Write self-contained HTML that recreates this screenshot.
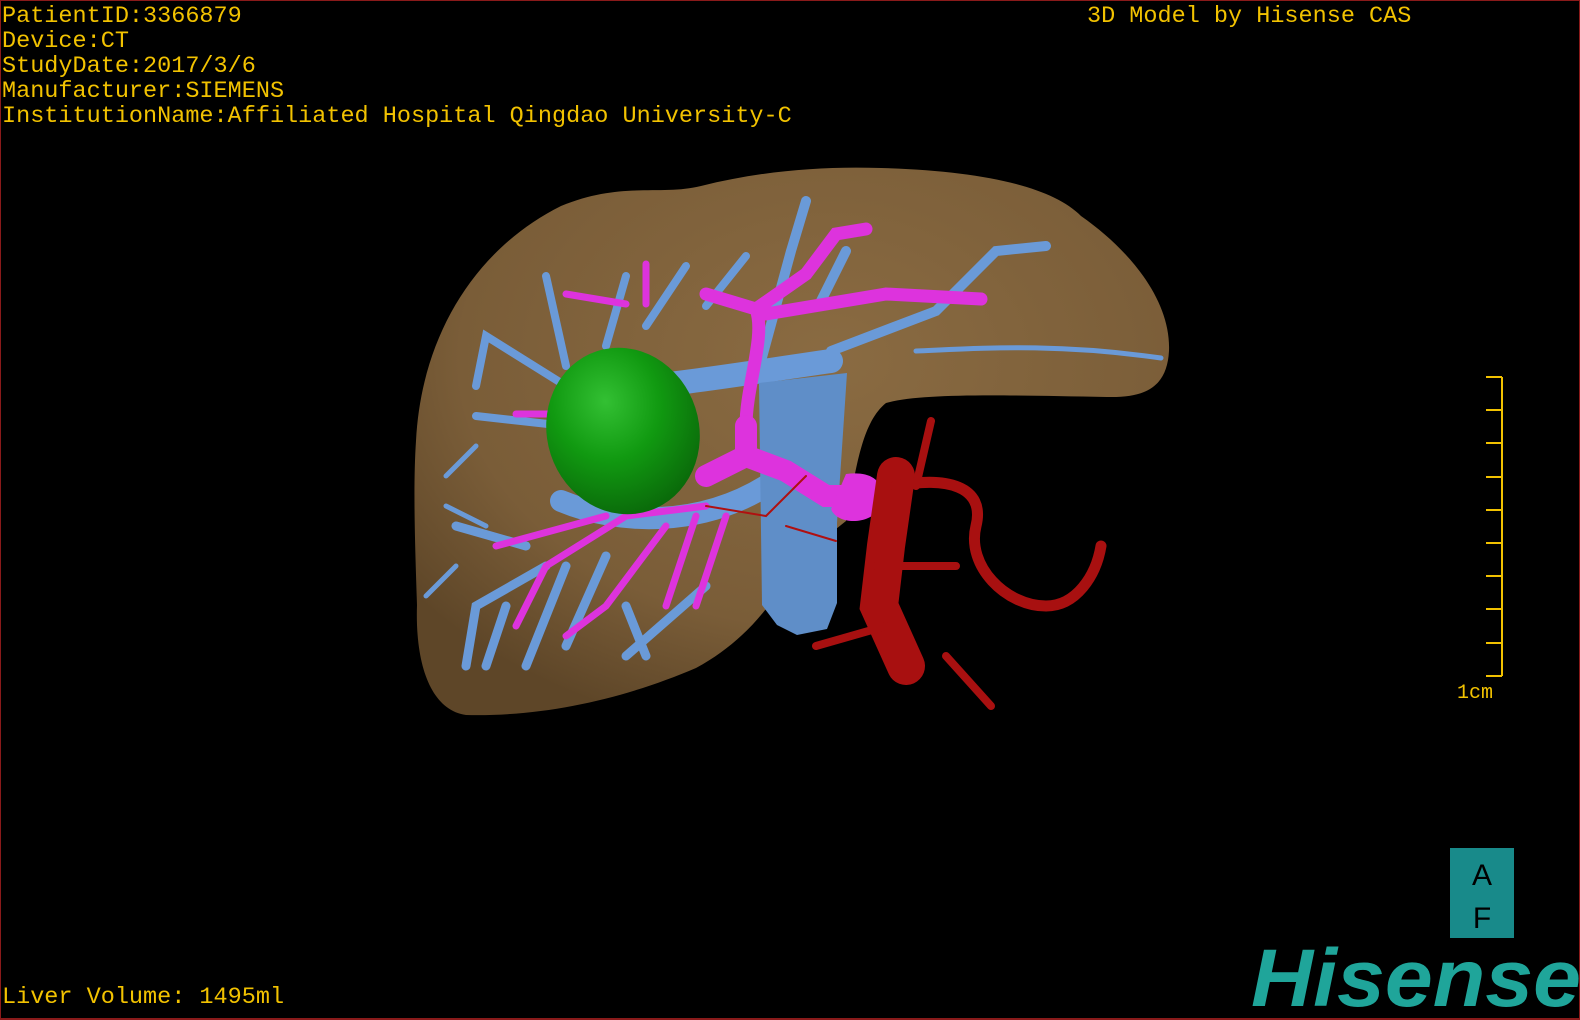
<!DOCTYPE html>
<html><head><meta charset="utf-8"><style>
html,body{margin:0;padding:0;background:#000;}
#wrap{position:relative;width:1580px;height:1020px;background:#000;overflow:hidden;box-sizing:border-box;border:1px solid #8a1a1a;border-bottom:2px solid #8a1a1a;}
.t{position:absolute;font-family:"Liberation Mono",monospace;font-size:23.5px;color:#f2c200;white-space:pre;line-height:25px;letter-spacing:0px;}
</style></head><body><div id="wrap">
<svg width="1580" height="1020" style="position:absolute;left:0;top:0">
<defs>
<radialGradient id="lv" cx="0.55" cy="0.35" r="0.7"><stop offset="0" stop-color="#8a6b42"/><stop offset="0.7" stop-color="#7a5d38"/><stop offset="1" stop-color="#5e4628"/></radialGradient>
<radialGradient id="gb" cx="0.45" cy="0.3" r="0.7"><stop offset="0" stop-color="#33c033"/><stop offset="0.5" stop-color="#119a11"/><stop offset="1" stop-color="#0a6a0a"/></radialGradient>
</defs>
<path d="M415,440 C420,340 470,250 560,205 C620,180 660,195 700,185 C760,170 820,165 880,167 C980,170 1050,185 1080,215 C1130,250 1170,300 1168,350 C1166,385 1146,397 1106,396 C1000,394 920,392 885,402 C860,422 855,470 845,520 L795,560 C775,600 745,640 695,667 C625,697 545,716 465,714 C430,709 414,664 416,604 C414,544 412,484 415,440 Z" fill="url(#lv)"/>
<g fill="none" stroke="#6a9ad8" stroke-linecap="round">
<path d="M560,500 C620,525 700,525 765,485" stroke-width="22"/>
<path d="M650,385 C700,380 760,370 830,360" stroke-width="24"/>
<path d="M760,360 L790,250 M790,250 L805,200 M820,300 L845,250 M830,350 L935,310 L995,250 L1045,245" stroke-width="10"/>
<path d="M915,350 C985,347 1055,342 1160,357" stroke-width="5"/>
<path d="M545,565 L475,605 L465,665 M525,545 L455,525 M505,605 L485,665 M565,565 L525,665 M605,555 L565,645 M625,605 L645,655 M705,585 L625,655" stroke-width="9"/>
<path d="M565,385 L485,335 L475,385 M565,365 L545,275 M605,345 L625,275 M645,325 L685,265 M705,305 L745,255 M565,425 L475,415" stroke-width="8"/>
<path d="M475,445 L445,475 M455,565 L425,595 M485,525 L445,505" stroke-width="5"/>
</g>
<path d="M758,382 L846,372 L836,522 L836,602 L826,628 L796,634 L776,624 L761,604 Z" fill="#5f8ec8"/>
<g fill="none" stroke="#dd33dd" stroke-linecap="round">
<path d="M745,425 C745,385 765,335 755,308 L705,293 M755,308 L805,273 L835,233 L865,228 M765,313 L885,293 L980,298" stroke-width="13"/>
<path d="M745,425 L745,455 L705,475 M745,455 L785,470 L825,495 L865,495" stroke-width="22"/>
<path d="M705,505 L625,515 L545,565 L515,625 M665,525 L605,605 L565,635 M695,515 L665,605 M725,515 L695,605 M605,515 L495,545 M625,303 L565,293 M645,303 L645,263 M515,413 L565,413" stroke-width="7"/>
</g>
<path d="M845,473 C868,470 888,478 878,508 C868,524 836,524 830,508 Z" fill="#dd33dd"/>
<ellipse cx="622" cy="430" rx="76" ry="84" transform="rotate(-18 622 430)" fill="url(#gb)"/>
<g fill="none" stroke="#a81010" stroke-linecap="round">
<path d="M895,475 L885,545 L878,605 L905,665" stroke-width="38"/>
<path d="M895,485 C945,475 985,485 975,525 C965,565 1005,605 1045,605 C1075,605 1095,575 1100,545" stroke-width="11"/>
<path d="M915,485 L930,420 M885,625 L815,645 M945,655 L990,705 M875,565 L955,565" stroke-width="8"/>
<path d="M705,505 L765,515 L805,475 M785,525 L835,540" stroke-width="2" stroke="#b01010"/>
</g>
<g stroke="#f2c200" stroke-width="2" fill="none">
<path d="M1501,376 L1501,675 M1485,376 L1501,376 M1485,675 L1501,675 M1485,409 L1501,409 M1485,442 L1501,442 M1485,476 L1501,476 M1485,509 L1501,509 M1485,542 L1501,542 M1485,575 L1501,575 M1485,608 L1501,608 M1485,642 L1501,642"/>
</g>
<rect x="1449" y="847" width="64" height="90" fill="#188a8a"/>
<text x="1481" y="884" text-anchor="middle" font-family="Liberation Sans,sans-serif" font-size="30" fill="#000">A</text>
<text x="1481" y="927" text-anchor="middle" font-family="Liberation Sans,sans-serif" font-size="30" fill="#000">F</text>
<text x="1250" y="1005" font-family="Liberation Sans,sans-serif" font-weight="bold" font-style="italic" font-size="82" fill="#1fa59a" textLength="330" lengthAdjust="spacingAndGlyphs">Hisense</text>
</svg>
<div class="t" style="left:1px;top:3px">PatientID:3366879
Device:CT
StudyDate:2017/3/6
Manufacturer:SIEMENS
InstitutionName:Affiliated Hospital Qingdao University-C</div>
<div class="t" style="left:1086px;top:3px">3D Model by Hisense CAS</div>
<div class="t" style="left:1456px;top:680px;font-size:20px">1cm</div>
<div class="t" style="left:1px;top:984px">Liver Volume: 1495ml</div>
</div></body></html>
